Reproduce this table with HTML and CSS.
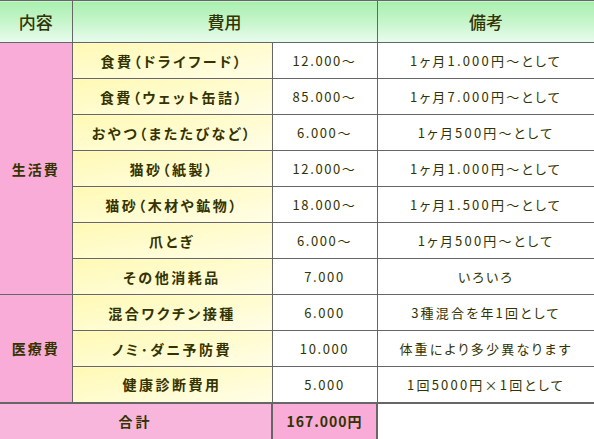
FILE: index.html
```html
<!DOCTYPE html>
<html lang="ja">
<head>
<meta charset="utf-8">
<title>猫の飼育費用</title>
<link rel="stylesheet" href="styles.css">
</head>
<body>
<table class="cost">
  <colgroup>
    <col class="col-cat">
    <col class="col-item">
    <col class="col-price">
    <col class="col-note">
  </colgroup>
  <thead>
    <tr class="head-row">
      <th class="head">内容</th>
      <th class="head" colspan="2">費用</th>
      <th class="head">備考</th>
    </tr>
  </thead>
  <tbody>
    <tr class="row">
      <td class="cat" rowspan="7">生活費</td>
      <td class="item">食費（ドライフード）</td>
      <td class="price">12.000～</td>
      <td class="note">1ヶ月1.000円～として</td>
    </tr>
    <tr class="row">
      <td class="item">食費（ウェット缶詰）</td>
      <td class="price">85.000～</td>
      <td class="note">1ヶ月7.000円～として</td>
    </tr>
    <tr class="row">
      <td class="item">おやつ（またたびなど）</td>
      <td class="price">6.000～</td>
      <td class="note">1ヶ月500円～として</td>
    </tr>
    <tr class="row">
      <td class="item">猫砂（紙製）</td>
      <td class="price">12.000～</td>
      <td class="note">1ヶ月1.000円～として</td>
    </tr>
    <tr class="row">
      <td class="item">猫砂（木材や鉱物）</td>
      <td class="price">18.000～</td>
      <td class="note">1ヶ月1.500円～として</td>
    </tr>
    <tr class="row">
      <td class="item">爪とぎ</td>
      <td class="price">6.000～</td>
      <td class="note">1ヶ月500円～として</td>
    </tr>
    <tr class="row">
      <td class="item">その他消耗品</td>
      <td class="price">7.000</td>
      <td class="note">いろいろ</td>
    </tr>
    <tr class="row">
      <td class="cat" rowspan="3">医療費</td>
      <td class="item">混合ワクチン接種</td>
      <td class="price">6.000</td>
      <td class="note">3種混合を年1回として</td>
    </tr>
    <tr class="row">
      <td class="item">ノミ･ダニ予防費</td>
      <td class="price">10.000</td>
      <td class="note">体重により多少異なります</td>
    </tr>
    <tr class="row">
      <td class="item">健康診断費用</td>
      <td class="price">5.000</td>
      <td class="note">1回5000円×1回として</td>
    </tr>
    <tr class="row total-row">
      <td class="total-label" colspan="2">合計</td>
      <td class="total-val">167.000円</td>
      <td class="total-blank"></td>
    </tr>
  </tbody>
</table>
</body>
</html>
```

FILE: styles.css
```css
html, body {
  margin: 0;
  padding: 0;
  background: #ffffff;
  overflow: hidden;
}

.cost {
  border-collapse: collapse;
  table-layout: fixed;
  width: 595px;
  font-family: "Noto Sans CJK JP", "Noto Sans", sans-serif;
  color: #333300;
  font-feature-settings: "palt";
}

.col-cat { width: 72px; }
.col-item { width: 200px; }
.col-price { width: 105px; }
.col-note { width: 218px; }

.cost th,
.cost td {
  border: 1px solid #666666;
  padding: 0;
  text-align: center;
  vertical-align: middle;
  white-space: nowrap;
  overflow: hidden;
}

.cost tr > :first-child { border-left: none; }
.head-row > * { border-top: none; }

.head-row { height: 42px; }
.row { height: 36px; }

.head {
  background: linear-gradient(to bottom, #a9efae 0%, #c6f5cb 50%, #e9fcef 100%);
  font-size: 17px;
  font-weight: 500;
  letter-spacing: 0;
}

.cat {
  background: #f8acd7;
  font-size: 14px;
  font-weight: 700;
  letter-spacing: 2px;
}

.item {
  background: linear-gradient(to bottom right, #fff9b4 0%, #fffcd4 60%, #fffde6 100%);
  font-size: 14px;
  font-weight: 700;
  letter-spacing: 2.5px;
}

.price,
.note {
  background: #ffffff;
  font-size: 13px;
  font-weight: 400;
}

.price { letter-spacing: 1.6px; }
.note { letter-spacing: 2.2px; }

.total-row > td {
  border-top: 2px solid #666666;
  border-bottom: none;
}

.total-label {
  background: #f9b6dc;
  font-size: 14px;
  font-weight: 700;
  letter-spacing: 3px;
}

.total-val {
  background: #f8acd7;
  font-size: 14px;
  font-weight: 700;
  letter-spacing: 1px;
  border-left: 2px solid #666666 !important;
  border-right: 2px solid #666666 !important;
}

.total-blank {
  background: #ffffff;
  border-right: none;
}
```
